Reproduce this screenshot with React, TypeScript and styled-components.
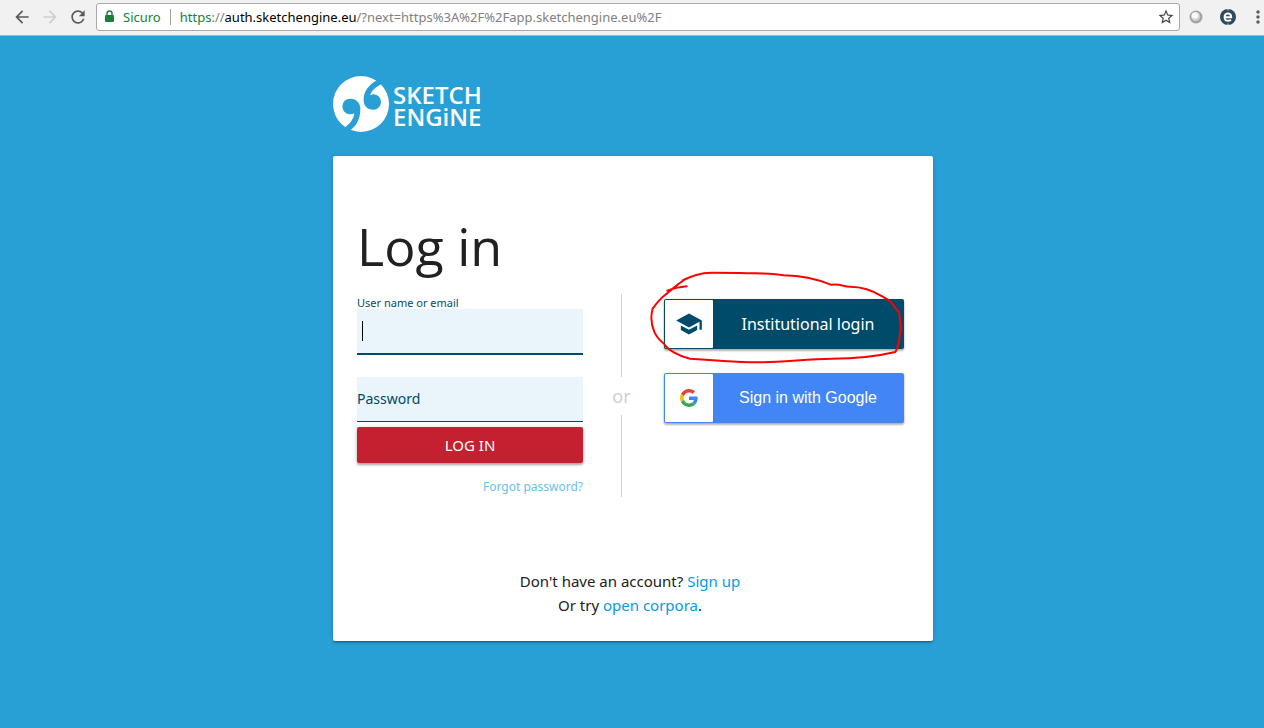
import React from "react";
import styled, { createGlobalStyle } from "styled-components";
import {
  MdArrowBack,
  MdArrowForward,
  MdMoreVert,
  MdRefresh,
  MdSchool,
  MdStarBorder,
} from "react-icons/md";

const GlobalStyle = createGlobalStyle`
  *, *::before, *::after { box-sizing: border-box; }
  html, body, #root { height: 100%; }
  body {
    margin: 0;
    background: #289fd5;
    color: #212121;
    font-family: "Segoe UI", "Noto Sans", "Open Sans", sans-serif;
    font-size: 15px;
    line-height: 24px;
  }
`;

/* Browser bar */

const Toolbar = styled.header`
  display: flex;
  align-items: center;
  height: 36px;
  padding: 0 0 2px 12px;
  background: #f1f1f1;
  border-bottom: 1px solid #b4b1ae;
`;

const ToolButton = styled.button<{ $color?: string }>`
  display: flex;
  align-items: center;
  justify-content: center;
  flex: none;
  width: 20px;
  height: 20px;
  margin-right: 8px;
  padding: 0;
  border: 0;
  background: none;
  color: ${(p) => p.$color ?? "#5a5a5a"};
`;

const AddressBar = styled.div`
  display: flex;
  align-items: center;
  flex: 1;
  min-width: 0;
  height: 28px;
  padding: 0 4px 0 6px;
  background: #fff;
  border: 1px solid #a9a9a9;
  border-radius: 3px;
  font-size: 13px;
  line-height: 20px;
`;

const Secure = styled.span`
  margin-left: 7px;
  padding-right: 9px;
  border-right: 1px solid #a0a0a0;
  color: #188038;
  line-height: 16px;
`;

const Url = styled.span`
  flex: 1;
  min-width: 0;
  overflow: hidden;
  margin-left: 9px;
  color: #808080;
  white-space: nowrap;
`;

const UrlPart = styled.span<{ $color: string }>`
  color: ${(p) => p.$color};
`;

const Extensions = styled.div`
  display: flex;
  align-items: center;
  flex: none;
  width: 84px;
  padding-left: 6px;
  overflow: hidden;
`;

const ExtensionButton = styled(ToolButton)`
  margin-right: 12px;

  & + & {
    margin-right: 10px;
  }
`;

/* Page */

const Page = styled.main`
  padding: 40px 0 40px 2px;
`;

const Column = styled.div`
  width: 100%;
  max-width: 600px;
  margin: 0 auto;
`;

const Brand = styled.a`
  display: flex;
  align-items: center;
  gap: 4px;
  height: 56px;
  margin-bottom: 24px;
  color: #fff;
  text-decoration: none;
`;

const BrandName = styled.span`
  display: flex;
  flex-direction: column;
  padding-top: 4px;
  font-family: "Open Sans", sans-serif;
  font-size: 24px;
  font-weight: 600;
  line-height: 22px;
`;

const Card = styled.section`
  padding: 54px 24px 24px;
  background: #fff;
  border-radius: 2px;
  box-shadow: 0 2px 2px rgba(0, 0, 0, 0.14), 0 1px 5px rgba(0, 0, 0, 0.12),
    0 3px 1px -2px rgba(0, 0, 0, 0.2);
`;

const Title = styled.h1`
  margin: 0 0 12px;
  font-family: "Segoe UI", "Open Sans", sans-serif;
  font-size: 52px;
  font-weight: 400;
  line-height: 72px;
`;

const Options = styled.div`
  display: grid;
  grid-template-columns: 226fr 77px 249fr;
  align-items: start;
`;

const Form = styled.form`
  display: flex;
  flex-direction: column;
`;

const Field = styled.div`
  position: relative;
  display: flex;
  flex-direction: column;
  color: #004b69;

  & + & {
    margin-top: 22px;
  }
`;

const TopLabel = styled.label`
  height: 15px;
  font-size: 11px;
  line-height: 18px;
`;

const InnerLabel = styled.label`
  position: absolute;
  top: 10px;
  left: 0;
  font-size: 14px;
`;

const Input = styled.input<{ $active?: boolean }>`
  width: 100%;
  height: ${(p) => (p.$active ? 46 : 45)}px;
  padding: 0 5px;
  border: 0;
  border-bottom: ${(p) => (p.$active ? 2 : 1)}px solid #004b69;
  border-radius: 0;
  outline: 0;
  background: #e9f4fb;
  color: #212121;
  font: inherit;
`;

const Caret = styled.span`
  position: absolute;
  top: 27px;
  left: 5px;
  width: 1px;
  height: 20px;
  background: #000;
`;

const Submit = styled.button`
  height: 36px;
  margin: 5px 0 12px;
  padding: 0;
  border: 0;
  border-radius: 2px;
  background: #c42030;
  box-shadow: 0 2px 2px rgba(0, 0, 0, 0.24), 0 1px 4px rgba(0, 0, 0, 0.2);
  color: #fff;
  font: inherit;
  font-size: 15px;
`;

const Link = styled.a`
  color: #039be5;
  text-decoration: none;
`;

const Forgot = styled.a`
  align-self: flex-end;
  color: #68c0ea;
  font-size: 12px;
  text-decoration: none;
`;

const Divider = styled.div`
  display: flex;
  flex-direction: column;
  align-items: center;
  height: 203px;
  color: #d0d0d0;
  font-size: 18px;
  line-height: 38px;

  &::before,
  &::after {
    content: "";
    flex: 1;
    width: 1px;
    background: #d0d0d0;
  }
`;

const Providers = styled.div`
  position: relative;
  display: flex;
  flex-direction: column;
  gap: 24px;
  padding: 5px 5px 0 4px;
`;

const ProviderButton = styled.button<{ $color: string; $arial?: boolean }>`
  display: flex;
  height: 50px;
  padding: 1px;
  border: 0;
  border-radius: 2px;
  background: ${(p) => p.$color};
  box-shadow: 0 2px 2px rgba(0, 0, 0, 0.2), 0 1px 3px rgba(0, 0, 0, 0.2);
  color: #fff;
  font-family: ${(p) => (p.$arial ? '"Liberation Sans", sans-serif' : "inherit")};
  font-size: 16px;
  line-height: 48px;
`;

const ProviderIcon = styled.span<{ $color: string }>`
  display: flex;
  align-items: center;
  justify-content: center;
  flex: none;
  width: 48px;
  height: 48px;
  background: #fff;
  border-radius: 1px;
  color: ${(p) => p.$color};
`;

const ProviderLabel = styled.span`
  flex: 1;
  text-align: center;
`;

const Ink = styled.svg`
  position: absolute;
  top: -32px;
  left: -20px;
  width: 280px;
  height: 175px;
  overflow: visible;
  pointer-events: none;
`;

const Footer = styled.footer`
  margin-top: 70px;
  padding-right: 6px;
  text-align: center;
`;

function BrandMark() {
  return (
    <svg width="56" height="56" viewBox="0 0 168 168" aria-hidden="true">
      <circle cx="84" cy="84" r="84" fill="#fff" />
      <g fill="#289fd5">
        <path d="M28 91A23 23 0 0 1 52 68C71 68 82 81 82 99C82 127 72 150 50 164L34 155C50 145 61 132 64 112C60 114 56 115 52 115A23 23 0 0 1 28 91Z" />
        <path d="M92 72C92 45 107 27 132 12L146 24C125 35 115 45 112 58C115 56 118 55 121 55A23 23 0 0 1 121 101C103 101 92 90 92 72Z" />
      </g>
    </svg>
  );
}

function LockIcon() {
  return (
    <svg width="13" height="13" viewBox="0 0 13 13" aria-hidden="true">
      <rect x="2" y="5" width="9" height="7" rx="1" fill="#188038" />
      <path d="M4 5V3.500a2.500 2.500 0 0 1 5 0V5" fill="none" stroke="#188038" strokeWidth="1.400" />
    </svg>
  );
}

function GoogleMark() {
  return (
    <svg width="18" height="18" viewBox="0 0 48 48" aria-hidden="true">
      <path fill="#EA4335" d="M24 9.5c3.54 0 6.71 1.22 9.21 3.6l6.85-6.85C35.9 2.38 30.47 0 24 0 14.62 0 6.51 5.38 2.56 13.22l7.98 6.19C12.43 13.72 17.74 9.5 24 9.5z" />
      <path fill="#4285F4" d="M46.98 24.55c0-1.57-.15-3.09-.38-4.55H24v9.02h12.94c-.58 2.96-2.26 5.48-4.78 7.18l7.73 6c4.51-4.18 7.09-10.36 7.09-17.65z" />
      <path fill="#FBBC05" d="M10.53 28.59c-.48-1.45-.76-2.99-.76-4.59s.27-3.14.76-4.59l-7.98-6.19C.92 16.46 0 20.12 0 24c0 3.88.92 7.54 2.56 10.78l7.97-6.19z" />
      <path fill="#34A853" d="M24 48c6.48 0 11.93-2.13 15.89-5.81l-7.73-6c-2.15 1.45-4.92 2.3-8.16 2.3-6.26 0-11.57-4.22-13.47-9.91l-7.98 6.19C6.51 42.62 14.62 48 24 48z" />
    </svg>
  );
}

function GlobeBadge() {
  return (
    <svg width="14" height="14" viewBox="0 0 14 14" aria-hidden="true">
      <circle cx="7" cy="7" r="6.500" fill="#a3a3a3" />
      <circle cx="6.600" cy="6.400" r="4.600" fill="#d0d0d0" />
      <circle cx="6" cy="5.600" r="3.200" fill="#fafafa" />
    </svg>
  );
}

function ReaderBadge() {
  return (
    <svg width="16" height="16" viewBox="0 0 16 16" aria-hidden="true">
      <circle cx="8" cy="8" r="8" fill="#2d4a60" />
      <path
        d="M4.600 8.300h6.600c0-2.400-1.300-3.800-3.200-3.800S4.600 6 4.600 8.200s1.500 3.600 3.500 3.600c1.200 0 2.100-.4 2.800-1.200"
        fill="none"
        stroke="#fff"
        strokeWidth="2"
      />
      <path d="M8 0v1.500M8 14.500V16" stroke="#d5dde2" strokeWidth="1" />
    </svg>
  );
}

export default function App() {
  return (
    <>
      <GlobalStyle />
      <Toolbar>
        <ToolButton aria-label="Back"><MdArrowBack size={20} /></ToolButton>
        <ToolButton aria-label="Forward" $color="#cfcfcf"><MdArrowForward size={20} /></ToolButton>
        <ToolButton aria-label="Reload"><MdRefresh size={20} /></ToolButton>
        <AddressBar>
          <LockIcon />
          <Secure>Sicuro</Secure>
          <Url>
            <UrlPart $color="#188038">https</UrlPart>://
            <UrlPart $color="#000">auth.sketchengine.eu</UrlPart>
            /?next=https%3A%2F%2Fapp.sketchengine.eu%2F
          </Url>
          <MdStarBorder size={18} color="#444" />
        </AddressBar>
        <Extensions>
          <ExtensionButton aria-label="Site extension"><GlobeBadge /></ExtensionButton>
          <ExtensionButton aria-label="Reader extension"><ReaderBadge /></ExtensionButton>
          <ToolButton aria-label="Menu"><MdMoreVert size={20} /></ToolButton>
        </Extensions>
      </Toolbar>

      <Page>
        <Column>
          <Brand href="#">
            <BrandMark />
            <BrandName>
              <span>SKETCH</span>
              <span>ENGiNE</span>
            </BrandName>
          </Brand>

          <Card>
            <Title>Log in</Title>
            <Options>
              <Form>
                <Field>
                  <TopLabel htmlFor="user">User name or email</TopLabel>
                  <Input id="user" type="text" $active />
                  <Caret />
                </Field>
                <Field>
                  <Input id="password" type="password" />
                  <InnerLabel htmlFor="password">Password</InnerLabel>
                </Field>
                <Submit type="button">LOG IN</Submit>
                <Forgot href="#">Forgot password?</Forgot>
              </Form>

              <Divider>or</Divider>

              <Providers>
                <ProviderButton $color="#004b69">
                  <ProviderIcon $color="#004b69"><MdSchool size={28} /></ProviderIcon>
                  <ProviderLabel>Institutional login</ProviderLabel>
                </ProviderButton>
                <ProviderButton $color="#4285f4" $arial>
                  <ProviderIcon $color="#4285f4"><GoogleMark /></ProviderIcon>
                  <ProviderLabel>Sign in with Google</ProviderLabel>
                </ProviderButton>
                <Ink viewBox="0 0 840 525" aria-hidden="true">
                  <path
                    d="M82 86C100 79 120 75 140 73M130 56C105 72 90 88 74 100C58 113 48 126 38 140C31 165 34 190 44 212C52 228 62 238 72 245C82 262 115 283 150 290C230 296 310 301 370 301C440 299 510 291 575 290C650 290 720 281 766 270C778 252 776 230 782 205C783 185 779 165 777 150C766 143 766 130 748 116C738 108 734 108 728 104C700 86 665 74 630 74C610 74 604 65 572 68C535 53 480 41 430 40C400 32 350 35 300 33L215 32C180 32 155 43 128 55"
                    fill="none"
                    stroke="#f00"
                    strokeWidth="6"
                    strokeLinecap="round"
                    strokeLinejoin="round"
                  />
                </Ink>
              </Providers>
            </Options>

            <Footer>
              Don't have an account? <Link href="#">Sign up</Link>
              <br />
              Or try <Link href="#">open corpora</Link>.
            </Footer>
          </Card>
        </Column>
      </Page>
    </>
  );
}
